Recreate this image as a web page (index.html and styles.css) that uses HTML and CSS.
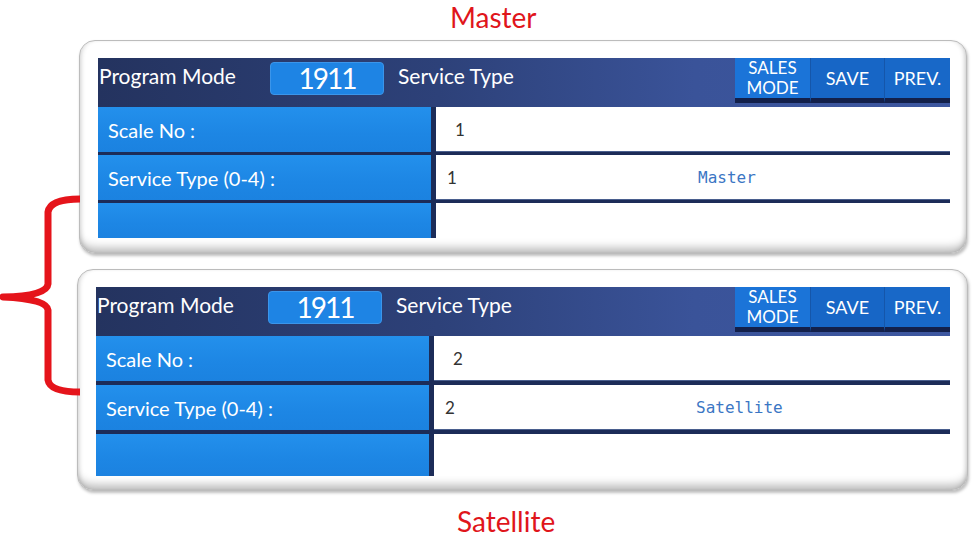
FILE: index.html
```html
<!DOCTYPE html>
<html>
<head>
<meta charset="utf-8">
<link rel="stylesheet" href="styles.css">
</head>
<body>
<div class="page">
  <svg class="brace" width="90" height="538" viewBox="0 0 90 538">
    <path d="M80 199 Q50 199 48 212 L48 284 Q47 296 3 297 Q47 299 48 310 L48 380 Q50 392 80 392" fill="none" stroke="#e5141b" stroke-width="7" stroke-linejoin="round"/>
  </svg>

  <div class="title title-master">Master</div>

  <div class="panel panel-a">
    <div class="screen screen-a">
      <div class="header">
        <div class="h-label">Program Mode</div>
        <div class="code">1911</div>
        <div class="h-title">Service Type</div>
        <div class="spacer"></div>
        <div class="btn btn-sales">SALES<br>MODE</div>
        <div class="btn btn-save">SAVE</div>
        <div class="btn btn-prev">PREV.</div>
      </div>
      <div class="body body-a">
        <div class="label">Scale No :</div>
        <div class="value"><span class="num num-1">1</span></div>
        <div class="label">Service Type (0-4) :</div>
        <div class="value"><span class="num num-2">1</span><span class="mono">Master</span></div>
        <div class="label"></div>
        <div class="value"></div>
      </div>
    </div>
  </div>

  <div class="panel panel-b">
    <div class="screen screen-b">
      <div class="header">
        <div class="h-label">Program Mode</div>
        <div class="code">1911</div>
        <div class="h-title">Service Type</div>
        <div class="spacer"></div>
        <div class="btn btn-sales">SALES<br>MODE</div>
        <div class="btn btn-save">SAVE</div>
        <div class="btn btn-prev">PREV.</div>
      </div>
      <div class="body body-b">
        <div class="label">Scale No :</div>
        <div class="value"><span class="num num-1">2</span></div>
        <div class="label">Service Type (0-4) :</div>
        <div class="value"><span class="num num-2">2</span><span class="mono">Satellite</span></div>
        <div class="label"></div>
        <div class="value"></div>
      </div>
    </div>
  </div>

  <div class="title title-sat">Satellite</div>
</div>
</body>
</html>
```

FILE: styles.css
```css
* { box-sizing: border-box; }
html, body { margin: 0; padding: 0; background: #fff; }
body { font-family: Lato, "Open Sans", sans-serif; width: 977px; height: 538px; overflow: hidden; }

.page { position: relative; width: 977px; height: 538px; display: flex; flex-direction: column; }

.brace { position: absolute; left: 0; top: 0; }

.title { color: #e0151b; font-size: 28px; line-height: 34px; height: 34px; }
.title-master { padding-left: 450px; margin-bottom: 6px; }
.title-sat { padding-left: 457px; margin-top: 13px; }

.panel {
  background: #fff;
  border: 1px solid #bcbcbc;
  border-radius: 16px;
  box-shadow: inset 0 -12px 10px -7px rgba(0,0,0,0.28), inset 4px 0 5px -3px rgba(0,0,0,0.18), inset -4px 0 5px -3px rgba(0,0,0,0.22), 1px 2px 3px rgba(0,0,0,0.25);
}
.panel-a { margin-left: 79px; width: 888px; height: 215px; padding: 17px 16px 0 18px; }
.panel-b { margin-left: 77px; width: 891px; height: 223px; margin-top: 15px; padding: 17px 17px 0 18px; }

.screen { overflow: hidden; display: flex; flex-direction: column; background: #1c2c58; }
.screen-a { height: 180px; }
.screen-b { height: 189px; }

.header {
  height: 49px;
  flex: none;
  display: flex;
  align-items: flex-start;
  background: linear-gradient(90deg, #24335f 0%, #2d4179 40%, #3a5399 70%, #3d57a0 100%);
  color: #fff;
}
.h-label { width: 172px; padding-left: 1px; font-size: 21px; line-height: 36px; }
.code {
  width: 114px; height: 33px; margin-top: 4px;
  background: #1e84e4; border-radius: 4px; border: 1px solid #3b95ea;
  font-size: 28px; line-height: 31px; text-align: center; letter-spacing: -2px;
}
.h-title { margin-left: 14px; font-size: 21px; line-height: 36px; }
.spacer { flex: 1; }
.btn {
  height: 45px; display: flex; align-items: center; justify-content: center; text-align: center;
  font-size: 17px; line-height: 20px; color: #fff;
  border-bottom: 5px solid #13204a;
}
.btn-save, .btn-prev { font-size: 18px; }
.btn-sales { width: 75px; background: #1b74d8; }
.btn-save { width: 74px; background: #1766c6; border-left: 1px solid #1556aa; }
.btn-prev { width: 66px; background: #1868c8; border-left: 1px solid #1556aa; }

.body { display: grid; grid-template-columns: 333px 1fr; column-gap: 5px; flex: 1; }
.body-a { grid-template-rows: 45px 45px 1fr; row-gap: 3px; }
.body-b { grid-template-rows: 45px 45px 1fr; row-gap: 4px; }

.label {
  background: linear-gradient(180deg, #2390ec 0%, #1d86e4 60%, #1b82e0 100%);
  color: #fff; font-size: 20px; padding-left: 10px;
  display: flex; align-items: center;
}
.value {
  background: #fff; color: #333; font-size: 17px;
  display: flex; align-items: center;
  border-bottom: 1px solid #4a5f8e;
}
.body .value:last-child { border-bottom: none; }
.num-1 { padding-left: 19px; }
.num-2 { padding-left: 11px; width: 262px; }
.mono { font-family: "DejaVu Sans Mono", "Liberation Mono", monospace; font-size: 16px; color: #3b76c4; }
```
